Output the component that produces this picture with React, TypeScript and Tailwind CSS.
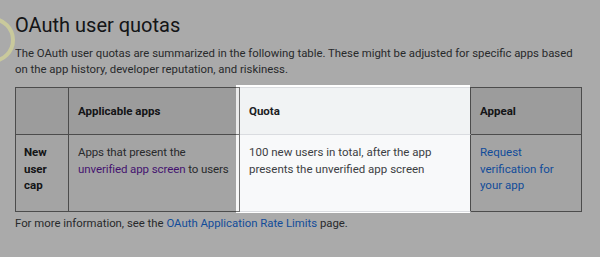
import React from 'react';

const linkBlue = 'text-[#1a73e8]';
const dark = 'border-[#737373]';

export default function App() {
  return (
    <div className="relative h-[257px] w-[600px] overflow-hidden bg-white font-['Roboto',sans-serif] text-[#202124]">
      <div className="px-[15px] pt-[13px]">
        <h2 className="text-[20px] leading-[24px] font-normal">OAuth user quotas</h2>
        <p className="mt-[8px] w-[580px] text-[11.35px] leading-[16px] text-[#3c4043]">
          The OAuth user quotas are summarized in the following table. These might be adjusted for specific apps based
          <br />
          on the app history, developer reputation, and riskiness.
        </p>

        <table className={`mt-[10px] w-[566px] table-fixed border-collapse border ${dark} text-[11.5px] leading-[16.5px]`}>
          <colgroup>
            <col className="w-[53px]" />
            <col className="w-[171px]" />
            <col className="w-[231px]" />
            <col className="w-[111px]" />
          </colgroup>
          <thead>
            <tr className="bg-[#ebebeb] text-left">
              <th className={`h-[47px] border ${dark} px-[8px]`} />
              <th className={`border ${dark} px-[9px] font-bold`}>Applicable apps</th>
              <th className="border border-[#dadce0] border-r-[#737373] bg-[#f1f3f4] px-[9px] font-bold">Quota</th>
              <th className={`border ${dark} px-[9px] font-bold`}>Appeal</th>
            </tr>
          </thead>
          <tbody>
            <tr className="bg-[#f7f7f7] align-top">
              <td className={`h-[77px] border ${dark} px-[8px] pt-[9px] font-bold`}>
                New
                <br />
                user
                <br />
                cap
              </td>
              <td className={`border ${dark} whitespace-nowrap pl-[9px] pt-[9px] tracking-[-0.1px] text-[#3c4043]`}>
                Apps that present the
                <br />
                <span className="text-[#681da8]">unverified app screen</span> to users
              </td>
              <td className="border border-[#dadce0] border-r-[#737373] bg-[#f8f9fa] px-[9px] pt-[9px] text-[#3c4043]">
                100 new users in total, after the app
                <br />
                presents the unverified app screen
              </td>
              <td className={`border ${dark} px-[9px] pt-[9px]`}>
                <span className={linkBlue}>
                  Request
                  <br />
                  verification for
                  <br />
                  your app
                </span>
              </td>
            </tr>
          </tbody>
        </table>

        <p className="mt-[3px] text-[11.35px] leading-[17px] text-[#3c4043]">
          For more information, see the <span className={linkBlue}>OAuth Application Rate Limits</span> page.
        </p>
      </div>

      {/* spotlight on the Quota column */}
      <div className="pointer-events-none absolute left-[236px] top-[85px] h-[128px] w-[234px] shadow-[0_0_0_2000px_rgba(0,0,0,0.335)]" />

      {/* click ring */}
      <svg className="pointer-events-none absolute left-0 top-0" width="40" height="80">
        <circle cx="-8" cy="40" r="21" fill="none" stroke="#c9c99c" strokeWidth="4" />
      </svg>
    </div>
  );
}
